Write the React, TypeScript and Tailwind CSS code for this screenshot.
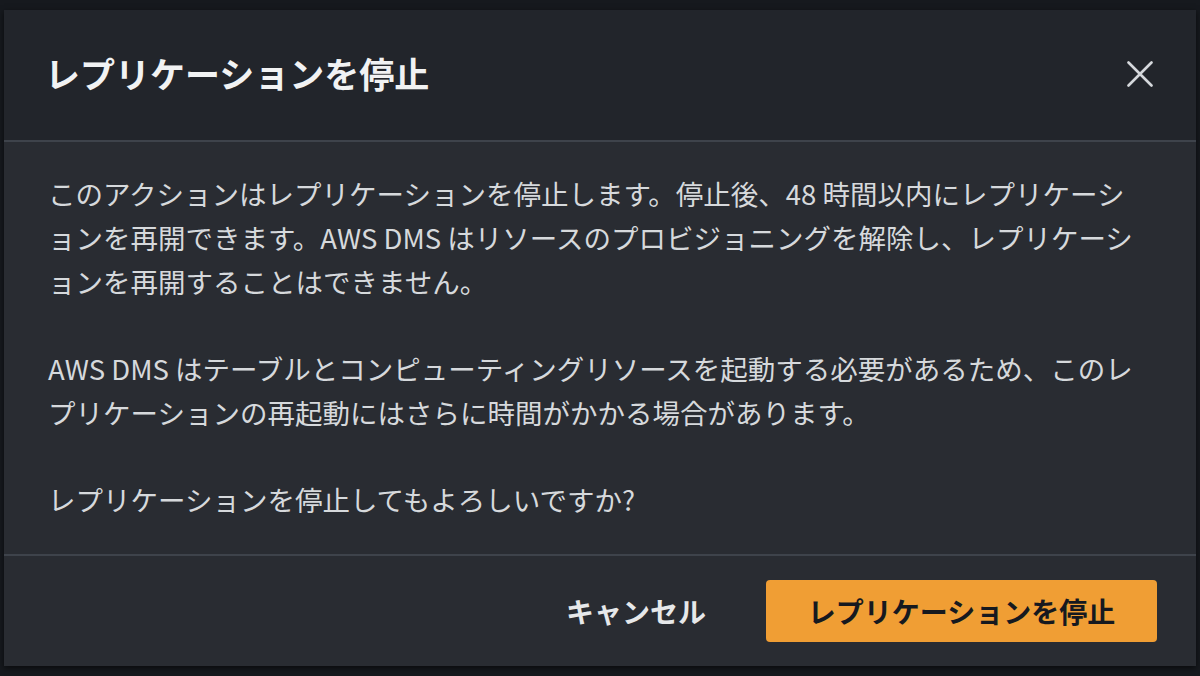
const font = { fontFamily: '"Noto Sans CJK JP", "Noto Sans", sans-serif' };

const paragraphs = [
  [
    'このアクションはレプリケーションを停止します。停止後、48 時間以内にレプリケーシ',
    'ョンを再開できます。AWS DMS はリソースのプロビジョニングを解除し、レプリケーシ',
    'ョンを再開することはできません。',
  ],
  [
    'AWS DMS はテーブルとコンピューティングリソースを起動する必要があるため、このレ',
    'プリケーションの再起動にはさらに時間がかかる場合があります。',
  ],
  ['レプリケーションを停止してもよろしいですか?'],
];

const App = () => {
  return (
    <div className="h-[676px] w-[1200px] bg-[#16191e] pl-[4px] pt-[10px]" style={font}>
      <div className="flex h-[656px] w-[1192px] flex-col bg-[#292c32] shadow-[0_2px_6px_rgba(0,0,0,0.6)]">
        {/* Header */}
        <div className="flex h-[130px] items-center justify-between bg-[#22252b] pb-[3px] pl-[41px] pr-[43px]">
          <h1 className="text-[35px] font-bold text-[#f1f2f3]">レプリケーションを停止</h1>
          <button className="text-[#d5d8dc]">
            <svg width="26" height="26" viewBox="0 0 26 26" fill="none" stroke="currentColor" strokeWidth="2.6" strokeLinecap="round">
              <path d="M1.5 1.5 L24.5 24.5 M24.5 1.5 L1.5 24.5" />
            </svg>
          </button>
        </div>
        <div className="h-[2px] bg-[#3e434b]" />

        {/* Body */}
        <div className="flex flex-1 flex-col gap-[43px] pl-[44px] pt-[29px] text-[27.5px] leading-[44px] text-[#d6d9dc]">
          {paragraphs.map((lines, i) => (
            <p key={i}>
              {lines.map((line, j) => (
                <span key={j} className="block whitespace-nowrap">
                  {line}
                </span>
              ))}
            </p>
          ))}
        </div>
        <div className="h-[2px] bg-[#3e434b]" />

        {/* Footer */}
        <div className="flex h-[110px] items-center justify-end gap-[60px] pr-[39px]">
          <button className="text-[28px] font-bold text-[#e6e8ea]">キャンセル</button>
          <button className="flex h-[62px] w-[391px] items-center justify-center rounded-[4px] bg-[#f09e34] text-[28px] font-bold text-[#16191f]">
            レプリケーションを停止
          </button>
        </div>
      </div>
    </div>
  );
};

export default App;
